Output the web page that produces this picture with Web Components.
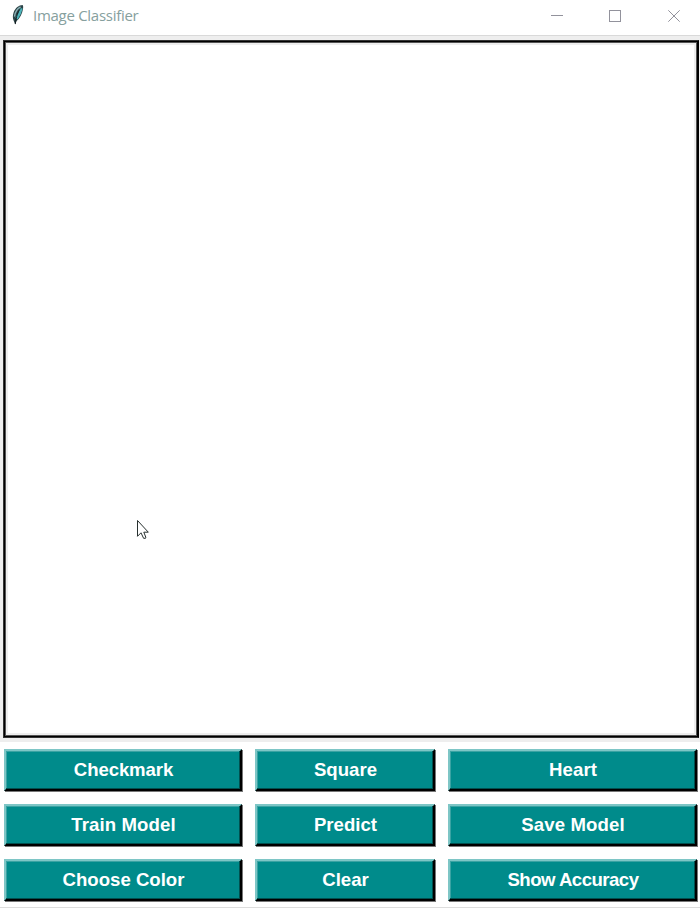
<!DOCTYPE html>
<html lang="en">
<head>
<meta charset="utf-8">
<title>Image Classifier</title>
<style>
html,body{margin:0;height:100%;overflow:hidden;background:#fff}
</style>
</head>
<body>
<classifier-window></classifier-window>
<script>
const define = (name, html) => customElements.define(name, class extends HTMLElement {
  constructor() {
    super();
    const t = document.createElement('template');
    t.innerHTML = html;
    this.attachShadow({mode: 'open'}).append(t.content.cloneNode(true));
  }
});

define('feather-icon', `
<style>:host{display:block;width:14px;height:22px}svg{display:block}</style>
<svg width="14" height="22" viewBox="0 0 14 22">
  <path d="M11.6 1 C8 1 4.2 4 2.6 8.4 C1.6 11.5 1.6 14 2.6 16.6 L4.2 20.5 L5.6 17 C9 14.4 11.2 9.5 12 5 C12.3 3.4 12.3 2 11.6 1Z" fill="#2b4347"/>
  <path d="M9.6 2.9 C6.4 4.6 4 8.5 3.5 12.6" fill="none" stroke="#8cb0b5" stroke-width="1.5"/>
  <path d="M10.3 4.3 C9.4 8.6 7.6 11.8 5.6 14.6" fill="none" stroke="#4cb4ba" stroke-width="2.7"/>
  <path d="M9.4 4.5 C7 8 5.2 12 4.3 20" fill="none" stroke="#10191c" stroke-width=".9"/>
</svg>`);

define('window-controls', `
<style>:host{display:block}svg{display:block}</style>
<svg width="150" height="34" viewBox="0 0 150 34" fill="none" stroke="#92929c">
  <path d="M1 15.5H13M59.5 10.5h11v11h-11z" shape-rendering="crispEdges"/>
  <path d="M118.3 10.3l11.4 11.4M129.7 10.3l-11.4 11.4"/>
</svg>`);

define('title-bar', `
<style>
:host{display:flex;align-items:flex-start;background:#fff;border-bottom:1px solid #d9d9d9;box-sizing:border-box;height:36px}
feather-icon{margin:4px 0 0 11px}
span{margin-left:8px;font:15px/22px "Open Sans","Noto Sans",sans-serif;color:#86a09e;padding-top:4px;white-space:nowrap;letter-spacing:-.28px}
window-controls{margin-left:auto}
</style>
<feather-icon></feather-icon><span><slot></slot></span><window-controls></window-controls>`);

define('mouse-pointer', `
<style>:host{display:block;width:14px;height:21px}svg{display:block}</style>
<svg width="14" height="21" viewBox="0 0 14 21"><path d="M1.5 1.5V17.3L5 13.8L7.6 19.3H9.5L9.8 18.2L7.8 13.2H12.3Z" fill="#fff" stroke="#27302f" stroke-width="1"/></svg>`);

define('drawing-canvas', `
<style>
:host{display:block;position:relative;height:706px;background:#eee;box-sizing:border-box;padding:4px 1px 4px 3px}
div{box-sizing:border-box;height:698px;background:#fff;border:1px solid #333;border-right-color:#000;box-shadow:inset 0 0 0 1px #000,inset 0 0 0 2px #555,inset 0 0 0 4px #eee}
mouse-pointer{position:absolute;left:136px;top:483px}
</style>
<div></div><mouse-pointer></mouse-pointer>`);

define('relief-button', `
<style>
:host{display:block;height:43px;box-sizing:border-box;padding:0 1px 1px 0}
button{display:flex;align-items:center;justify-content:center;width:100%;height:100%;margin:0;padding:0 0 0 1px;box-sizing:border-box;background:#008b8b;border:2px solid;border-color:#7ec6c6 #000 #000 #7ec6c6;box-shadow:1px 1px #777,inset -1px -1px #00504f,inset 1px 1px #3aa3a3;color:#fff;font:bold 18.6px/24px "Liberation Sans",Arial,sans-serif;white-space:nowrap}
span{letter-spacing:var(--track,0)}
</style>
<button><span><slot></slot></span></button>`);

define('button-grid', `
<style>:host{display:grid;grid-template-columns:239px 181px 250px;column-gap:12px;row-gap:12px;padding:7px 2px 5px 4px;background:#fff;border-bottom:1px solid #ddd}</style>
<slot></slot>`);

define('classifier-window', `
<style>:host{display:flex;flex-direction:column;width:700px;height:908px;overflow:hidden}</style>
<title-bar>Image Classifier</title-bar>
<drawing-canvas></drawing-canvas>
<button-grid>
  <relief-button style="--track:-.1px">Checkmark</relief-button><relief-button>Square</relief-button><relief-button style="--track:.1px">Heart</relief-button>
  <relief-button style="--track:.1px">Train Model</relief-button><relief-button>Predict</relief-button><relief-button style="--track:.1px">Save Model</relief-button>
  <relief-button>Choose Color</relief-button><relief-button>Clear</relief-button><relief-button style="--track:-.52px">Show Accuracy</relief-button>
</button-grid>`);
</script>
</body>
</html>
